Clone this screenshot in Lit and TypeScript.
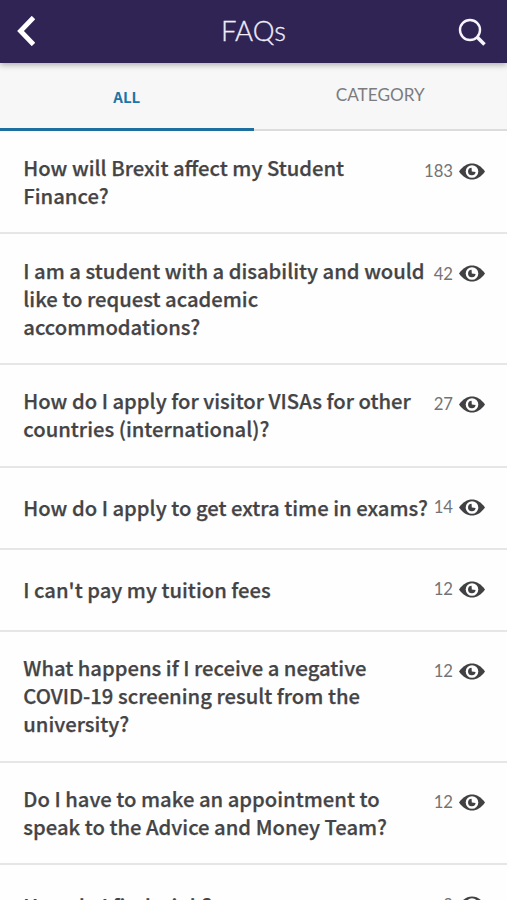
import { LitElement, html, css } from "lit";
import { customElement, property } from "lit/decorators.js";

interface Faq {
  lines: string[];
  views: number;
}

const FAQS: Faq[] = [
  { lines: ["How will Brexit affect my Student", "Finance?"], views: 183 },
  { lines: ["I am a student with a disability and would", "like to request academic", "accommodations?"], views: 42 },
  { lines: ["How do I apply for visitor VISAs for other", "countries (international)?"], views: 27 },
  { lines: ["How do I apply to get extra time in exams?"], views: 14 },
  { lines: ["I can't pay my tuition fees"], views: 12 },
  { lines: ["What happens if I receive a negative", "COVID-19 screening result from the", "university?"], views: 12 },
  { lines: ["Do I have to make an appointment to", "speak to the Advice and Money Team?"], views: 12 },
  { lines: ["How do I find a job?"], views: 9 },
];

@customElement("faq-row")
export class FaqRow extends LitElement {
  @property({ attribute: false }) faq!: Faq;

  static styles = css`
    :host {
      display: flex;
      box-sizing: border-box;
      justify-content: space-between;
      padding: 22.500px 22px 22.100px 23.300px;
      border-bottom: 2px solid #e6e6e6;
      min-height: 82.2px;
    }
    .question {
      font: 500 20.240px/28px "Noto Sans CJK JP", "Noto Sans", sans-serif;
      color: #444446;
      -webkit-text-stroke: 0.25px #444446;
      white-space: nowrap;
    }
    .single {
      padding-top: 4.200px;
    }
    .line {
      display: block;
    }
    .views {
      display: flex;
      align-items: center;
      gap: 6px;
      height: 34px;
      font: 400 16.700px/34px Lato, sans-serif;
      color: #737375;
    }
    .eye {
      width: 26px;
      height: 17px;
      display: block;
    }
  `;

  render() {
    const { lines, views } = this.faq;
    return html`
      <div class="question ${lines.length === 1 ? "single" : ""}">
        ${lines.map((l) => html`<span class="line">${l}</span>`)}
      </div>
      <div class="views">
        <span>${views}</span>
        <svg class="eye" viewBox="0 0 26 17">
          <path d="M0 8.500C4 3 8.300.5 13 .5S22 3 26 8.500C22 14 17.700 16.500 13 16.500S4 14 0 8.500Z" fill="#414143" />
          <circle cx="13" cy="8.500" r="6.300" fill="#fff" />
          <path d="M12.600 4.700 12.800 8.400 16.600 9.100A3.800 3.800 0 1 1 12.600 4.700Z" fill="#414143" />
        </svg>
      </div>
    `;
  }
}

@customElement("app-root")
export class AppRoot extends LitElement {
  static styles = css`
    :host {
      display: flex;
      flex-direction: column;
      height: 900px;
      overflow: hidden;
      background: #fefefe;
    }
    .header {
      display: grid;
      grid-template-columns: 60px 1fr 60px;
      align-items: center;
      flex: none;
      height: 62.500px;
      background: #2f2454;
      box-shadow: 0 2px 6px rgba(0, 0, 0, 0.3);
      z-index: 1;
    }
    .back {
      width: 18px;
      height: 30px;
      margin-left: 17px;
    }
    .title {
      text-align: center;
      font: 300 27.500px/62px Lato, sans-serif;
      color: #f1edfa;
      -webkit-text-stroke: 0.3px #f1edfa;
    }
    .search {
      width: 28px;
      height: 28px;
      margin: 1px 0 0 11px;
    }
    .tabs {
      display: grid;
      grid-template-columns: 1fr 1fr;
      grid-template-rows: 68px;
      flex: none;
      height: 68px;
      background: #f7f7f7;
    }
    .tab {
      box-sizing: border-box;
      text-align: center;
      border-bottom: 2px solid #dcdcdc;
      font: 400 17.200px/63px Lato, sans-serif;
      color: #7c7c7e;
    }
    .active {
      border-bottom: 3px solid #1c6f9f;
      font: 700 15px/67px "Noto Sans CJK JP", sans-serif;
      color: #1c75a8;
    }
    .list {
      flex: none;
      padding-top: 1.300px;
    }
  `;

  render() {
    return html`
      <header class="header">
        <svg class="back" viewBox="0 0 18 30">
          <path d="M16.500 1.500 3.500 15 16.500 28.500" fill="none" stroke="#fff" stroke-width="4.800" />
        </svg>
        <div class="title">FAQs</div>
        <svg class="search" viewBox="0 0 28 28">
          <circle cx="12" cy="12" r="10" fill="none" stroke="#f7f4fd" stroke-width="2.400" />
          <path d="M18.800 18.800 26.500 26.500" stroke="#f7f4fd" stroke-width="3.600" />
        </svg>
      </header>
      <nav class="tabs">
        <div class="tab active">ALL</div>
        <div class="tab">CATEGORY</div>
      </nav>
      <main class="list">${FAQS.map((f) => html`<faq-row .faq=${f}></faq-row>`)}</main>
    `;
  }
}
